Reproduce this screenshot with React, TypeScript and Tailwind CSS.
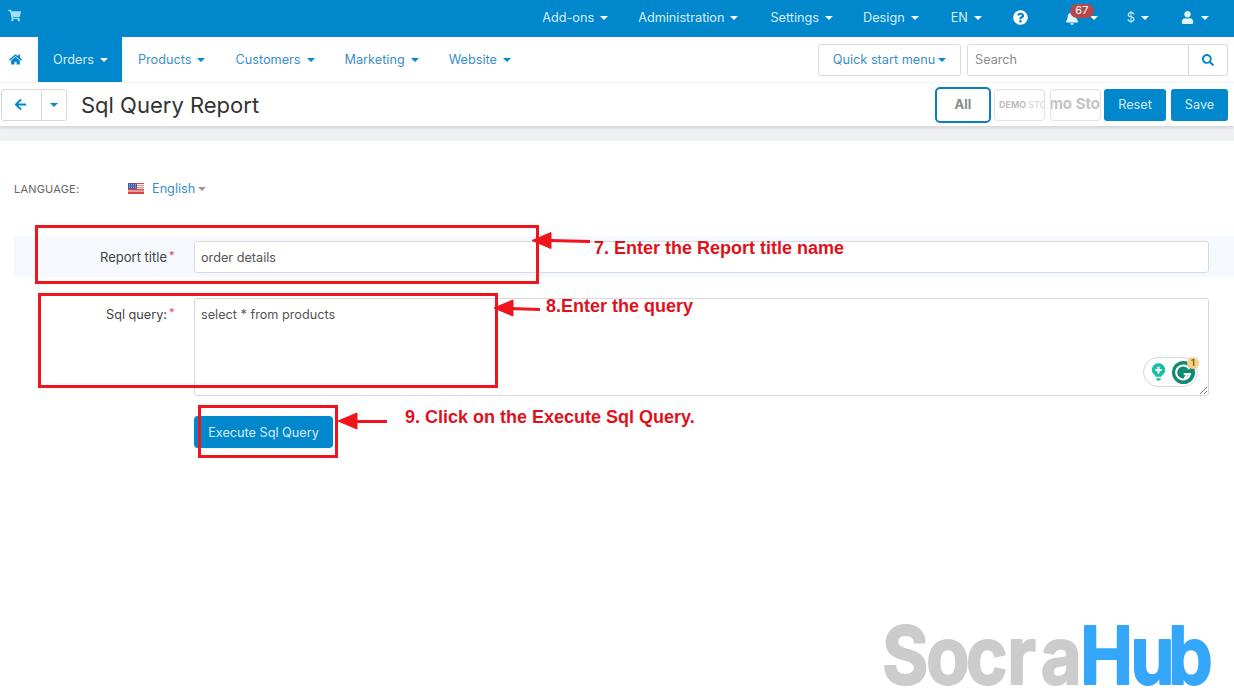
import { FaArrowLeft, FaBell, FaHome, FaQuestionCircle, FaSearch, FaShoppingCart, FaUser } from "react-icons/fa"

function Caret({ className = "" }: { className?: string }) {
  return <span className={`inline-block w-0 h-0 border-x-[4px] border-t-[4px] border-x-transparent border-t-current ${className}`} />
}

function TopItem({ label, className = "" }: { label: string; className?: string }) {
  return (
    <div className={`flex items-center gap-[6px] ${className}`}>
      <span>{label}</span>
      <Caret className="text-white" />
    </div>
  )
}

function NavItem({ label, active }: { label: string; active?: boolean }) {
  return (
    <div className={`flex h-full items-center gap-[6px] pl-[15px] ${active ? "mr-[1px] bg-[#0087cc] pr-[14px] text-[#d8eefa]" : "pr-[15px] text-[#3a8fc9]"}`}>
      <span>{label}</span>
      <Caret className={active ? "text-white" : "text-[#0087cc]"} />
    </div>
  )
}

function UsFlag() {
  return (
    <svg width="16" height="11" viewBox="0 0 16 11" className="-mt-[1px] block">
      <rect width="16" height="11" fill="#f4f4f4" />
      <rect y="0" width="16" height="1" fill="#d9453d" />
      <rect y="2" width="16" height="1" fill="#e98a84" />
      <rect y="4" width="16" height="1" fill="#e98a84" />
      <rect y="6" width="16" height="1.5" fill="#d9453d" />
      <rect y="8.5" width="16" height="2.5" fill="#d9453d" />
      <rect width="9" height="6" fill="#4a5aa8" />
      <path d="M1 1.500h7M1 3h7M1 4.500h7" stroke="#c5cbe6" strokeWidth="0.6" strokeDasharray="1 1" />
    </svg>
  )
}

function GrammarlyBadge() {
  return (
    <div className="absolute right-[10px] bottom-[8px] flex h-[30px] w-[55px] items-center justify-between rounded-full border border-[#d5d5d5] bg-white pl-[7px] pr-[2px]">
      <svg width="15" height="20" viewBox="0 0 17 22">
        <path d="M8.500 1a7.500 7.500 0 0 0-4.200 13.700c.6.4.9 1 .9 1.600h6.600c0-.6.3-1.200.9-1.600A7.500 7.500 0 0 0 8.500 1z" fill="#15bfa3" />
        <path d="M5.800 18h5.400l-.6 2.500H6.400z" fill="#15bfa3" />
        <path d="M7.300 5h2.400v2.600h2.600v2.400H9.700v2.600H7.300V10H4.700V7.600h2.600z" fill="#fff" />
      </svg>
      <div className="relative h-[23px] w-[23px] rounded-full bg-[#0f8a70]">
        <svg width="23" height="23" viewBox="0 0 23 23">
          <path d="M17 7.500A7 7 0 1 0 18 13h-5.500M13 16.500l2.500-3.500" fill="none" stroke="#fff" strokeWidth="2" strokeLinecap="round" />
        </svg>
        <span className="absolute -top-[4px] -right-[4px] flex h-[12px] w-[12px] items-center justify-center rounded-full bg-[#f7cf85] text-[9px] font-semibold leading-none text-[#6b5a2c]">1</span>
      </div>
    </div>
  )
}

function Annotations() {
  return (
    <div className="pointer-events-none absolute inset-0 font-['Liberation_Sans',Arial,sans-serif] font-bold text-[#e0111b]">
      <div className="absolute left-[35px] top-[225px] h-[59px] w-[504px] border-[3px] border-[#f0141c]" />
      <div className="absolute left-[38px] top-[293px] h-[95px] w-[460px] border-[3px] border-[#f0141c]" />
      <div className="absolute left-[198px] top-[405px] h-[53px] w-[140px] border-[3px] border-[#f0141c]" />
      <svg className="absolute inset-0" width="1234" height="690">
        <g fill="#f0141c" stroke="#f0141c">
          <path d="M590 241.500L550 240.500" strokeWidth="3" fill="none" />
          <path d="M532 240.500l19-8v16z" strokeWidth="1" />
          <path d="M540 309.500L510 308.500" strokeWidth="3" fill="none" />
          <path d="M494 308l19-8v16z" strokeWidth="1" />
          <path d="M387 421.500L350 421.500" strokeWidth="3" fill="none" />
          <path d="M338 421l19-8v16z" strokeWidth="1" />
        </g>
      </svg>
      <span className="absolute left-[594px] top-[238px] whitespace-nowrap text-[18px] leading-[20px]">7. Enter the Report title name</span>
      <span className="absolute left-[546px] top-[296px] whitespace-nowrap text-[18px] leading-[20px]">8.Enter the query</span>
      <span className="absolute left-[405px] top-[407px] whitespace-nowrap text-[18px] leading-[20px]">9. Click on the Execute Sql Query.</span>
    </div>
  )
}

function Watermark() {
  return (
    <svg className="absolute inset-0" width="1234" height="690">
      <g transform="translate(885 684) scale(0.88 1)" fontFamily="Inter, sans-serif" fontWeight="700" fontSize="80" strokeWidth="2" strokeLinejoin="round">
        <text x="-3 47 92 139 177" fill="#cccccc" stroke="#cccccc">Socra</text>
        <text x="222 279 322" fill="#35a7fb" stroke="#35a7fb">Hub</text>
      </g>
    </svg>
  )
}

export default function App() {
  return (
    <div className="relative h-[690px] w-[1234px] overflow-hidden bg-white font-['Inter',sans-serif] text-[12.7px] text-[#333]">
      {/* top bar */}
      <header className="flex h-[37px] items-center justify-between bg-[#0087cc] pl-[8px] pr-[25px] text-[#d8eefa]">
        <FaShoppingCart className="-mt-[6px] text-[13px] text-[#a9dcf7]" />
        <div className="-mt-[1px] flex items-center gap-[30px]">
          <TopItem label="Add-ons" />
          <TopItem label="Administration" className="mr-[2px]" />
          <TopItem label="Settings" />
          <TopItem label="Design" />
          <TopItem label="EN" className="ml-[2px]" />
          <FaQuestionCircle className="-mt-[1px] ml-[1px] text-[15px] text-white" />
          <div className="relative ml-[7px] flex items-center gap-[11px]">
            <FaBell className="text-[14px] text-[#e6f5fd]" />
            <Caret className="text-white" />
            <span className="absolute -top-[7px] left-[5px] flex h-[14px] w-[24px] items-center justify-center rounded-full bg-[#b5484b] text-[11px] leading-none text-white">67</span>
          </div>
          <TopItem label="$" className="-ml-[1px]" />
          <div className="ml-[2px] flex items-center gap-[7px]">
            <FaUser className="text-[13px] text-[#e6f5fd]" />
            <Caret className="text-white" />
          </div>
        </div>
      </header>

      {/* main nav */}
      <nav className="flex h-[45px] items-center justify-between pr-[6px]">
        <div className="flex h-full items-center">
          <div className="flex h-full w-[38px] items-center pl-[9px]">
            <FaHome className="text-[13px] text-[#0087cc]" />
          </div>
          <div className="flex h-full">
            <NavItem label="Orders" active />
            <NavItem label="Products" />
            <NavItem label="Customers" />
            <NavItem label="Marketing" />
            <NavItem label="Website" />
          </div>
        </div>
        <div className="flex h-[32px] items-center gap-[6px]">
          <button className="flex h-full w-[143px] items-center justify-center gap-[3px] rounded-[3px] border border-[#d9d9d9] text-[#3a8fc9]">
            Quick start menu
            <Caret className="text-[#0087cc]" />
          </button>
          <div className="flex h-full w-[261px] rounded-[3px] border border-[#d9d9d9]">
            <span className="flex flex-1 items-center pl-[7px] text-[#8c8c8c]">Search</span>
            <span className="flex w-[39px] items-center justify-center border-l border-[#d9d9d9]">
              <FaSearch className="text-[12px] text-[#0087cc]" />
            </span>
          </div>
        </div>
      </nav>

      {/* toolbar */}
      <div className="relative flex h-[44px] items-center justify-between border-t border-[#f3f3f3] pl-[1px] pr-[6px] shadow-[0_2px_3px_rgba(0,0,0,0.12)]">
        <div className="flex items-center">
          <div className="flex h-[32px] w-[66px] rounded-[3px] border border-[#d9d9d9]">
            <span className="flex w-[40px] items-center justify-center border-r border-[#d9d9d9]">
              <FaArrowLeft className="-ml-[2px] text-[13px] text-[#0087cc]" />
            </span>
            <span className="flex flex-1 items-center justify-center">
              <Caret className="text-[#0087cc]" />
            </span>
          </div>
          <h1 className="ml-[14px] pt-[1px] text-[22px] leading-[32px] text-[#333]">Sql Query Report</h1>
        </div>
        <div className="flex items-center">
          <div className="flex h-[36px] w-[56px] items-center justify-center rounded-[5px] border-2 border-[#0a7fbd] text-[13px] font-bold text-[#8a8a8a]">All</div>
          <div className="ml-[3px] flex h-[32px] w-[51px] items-center overflow-hidden whitespace-nowrap rounded-[4px] border border-[#e2e2e2] pl-[4px] text-[9px] text-[#bdbdbd]">
            <span className="font-bold">DEMO</span><span className="ml-[2px] font-normal text-[#cfcfcf]">STO</span>
          </div>
          <div className="ml-[5px] flex h-[32px] w-[51px] items-center justify-end overflow-hidden whitespace-nowrap rounded-[4px] border border-[#e2e2e2] text-[15px] font-bold text-[#c4c4c4]">
            <span className="shrink-0">emo Sto</span>
          </div>
          <button className="ml-[3px] h-[32px] w-[62px] rounded-[3px] bg-[#0087cc] text-[#d8eefa]">Reset</button>
          <button className="ml-[5px] h-[32px] w-[57px] rounded-[3px] bg-[#0087cc] text-[#d8eefa]">Save</button>
        </div>
      </div>

      <div className="h-[15px] bg-[#f0f1f3]" />

      {/* language */}
      <div className="mt-[40px] flex h-[16px] items-center pl-[14px]">
        <span className="w-[114px] text-[11px] tracking-[0.2px] text-[#666]">LANGUAGE:</span>
        <UsFlag />
        <span className="ml-[8px] text-[#3a8fc9]">English</span>
        <Caret className="ml-[3px] text-[#9a9a9a]" />
      </div>

      {/* form */}
      <div className="mt-[39px] ml-[14px] flex h-[41px] items-center bg-[#f5f9fd] pr-[25px]">
        <label className="w-[153px] whitespace-nowrap pt-[2px] text-right text-[13px] text-[#444]">Report title</label>
        <span className="ml-[2px] -mt-[3px] w-[25px] text-[11px] text-[#e0474d]">*</span>
        <div className="flex h-[32px] flex-1 items-center rounded-[3px] border border-[#d5dbe3] bg-white pl-[6px] pt-[2px] text-[#555]">order details</div>
      </div>

      <div className="mt-[21px] ml-[14px] flex pr-[25px]">
        <label className="-ml-[6px] w-[159px] pt-[9px] text-right leading-[16px] text-[#444]">Sql query:</label>
        <span className="ml-[2px] w-[25px] pt-[6px] text-[11px] leading-[16px] text-[#e0474d]">*</span>
        <div className="relative h-[98px] flex-1 rounded-[3px] border border-[#d9d9d9] bg-white pl-[6px] pt-[8px] leading-[16px] text-[#555]">
          select * from products
          <GrammarlyBadge />
          <svg className="absolute right-0 bottom-0" width="10" height="10" viewBox="0 0 10 10">
            <path d="M9 2L2 9M9 6L6 9" stroke="#777" strokeWidth="1" />
          </svg>
        </div>
      </div>

      <div className="mt-[20px] pl-[194px]">
        <button className="h-[32px] w-[139px] rounded-[4px] bg-[#0087cc] pt-[1px] text-[#d8eefa]">Execute Sql Query</button>
      </div>

      <Annotations />
      <Watermark />
    </div>
  )
}
